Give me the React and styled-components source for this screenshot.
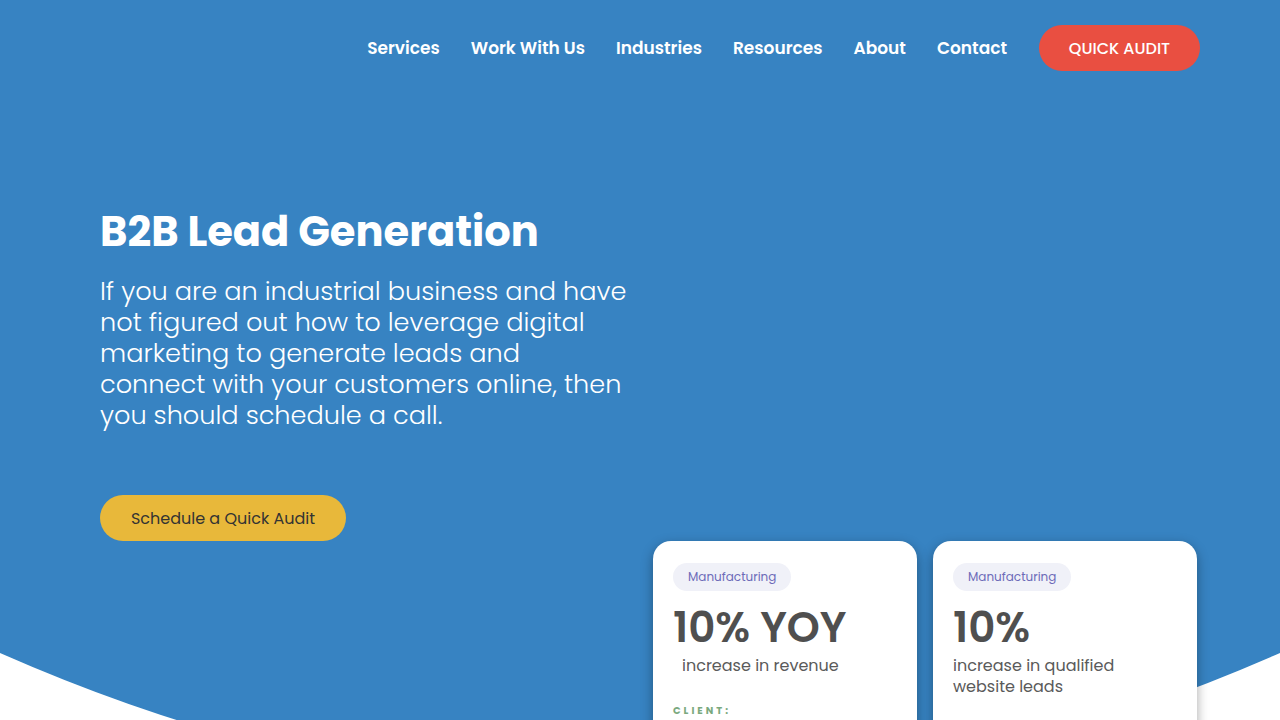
import React from "react";
import styled, { createGlobalStyle } from "styled-components";

const GlobalStyle = createGlobalStyle`
  html, body {
    margin: 0;
    padding: 0;
    background: #ffffff;
    font-family: "Poppins", "Open Sans", "Liberation Sans", sans-serif;
  }
  * { box-sizing: border-box; }
`;

// nav links
const links = ["Services", "Work With Us", "Industries", "Resources", "About", "Contact"];

// result cards
const results = [
  { tag: "Manufacturing", big: "10% YOY", text: "increase in revenue", indent: true },
  { tag: "Manufacturing", big: "10%", text: "increase in qualified website leads", indent: false },
];

const App = () => {
  return (
    <>
      <GlobalStyle />
      <Hero>
        <Curve viewBox="0 0 1280 147" preserveAspectRatio="none">
          <path d="M0 0 Q640 282 1280 0 L1280 147 L0 147 Z" fill="#ffffff" />
        </Curve>
        <Container>
          <Header>
            <Nav>
              {links.map((l) => (
                <NavLink key={l}>{l}</NavLink>
              ))}
            </Nav>
            <AuditButton>QUICK AUDIT</AuditButton>
          </Header>

          <Intro>
            <Title>B2B Lead Generation</Title>
            <Lead>
              If you are an industrial business and have<br />
              not figured out how to leverage digital<br />
              marketing to generate leads and<br />
              connect with your customers online, then<br />
              you should schedule a call.
            </Lead>
            <ScheduleButton>Schedule a Quick Audit</ScheduleButton>
          </Intro>

          <Cards>
            {results.map((r, i) => (
              <Card key={i}>
                <Tag>{r.tag}</Tag>
                <Big>{r.big}</Big>
                <Desc $indent={r.indent}>{r.text}</Desc>
                <Client>CLIENT:</Client>
              </Card>
            ))}
          </Cards>
        </Container>
      </Hero>
    </>
  );
};

const Hero = styled.section`
  position: relative;
  height: 800px;
  background: #3783c2;
`;

const Curve = styled.svg`
  position: absolute;
  left: 0;
  top: 653px;
  width: 100%;
  height: 147px;
  display: block;
`;

const Container = styled.div`
  position: relative;
  z-index: 1;
  padding: 0 80px 0 100px;
`;

const Header = styled.header`
  display: flex;
  justify-content: flex-end;
  align-items: center;
  padding-top: 25px;
  height: 71px;
`;

const Nav = styled.nav`
  display: flex;
  gap: 31px;
  margin-right: 32px;
`;

const NavLink = styled.a`
  color: #ffffff;
  font-size: 17px;
  font-weight: 600;
  cursor: pointer;
`;

const AuditButton = styled.button`
  width: 161px;
  height: 46px;
  border: none;
  border-radius: 23px;
  background: #e94f41;
  color: #ffffff;
  font-family: inherit;
  font-size: 16px;
  font-weight: 500;
`;

const Intro = styled.div`
  padding-top: 136px;
  height: 470px;
`;

const Title = styled.h1`
  margin: 0;
  color: #ffffff;
  font-size: 41.6px;
  font-weight: 700;
  line-height: 50px;
`;

const Lead = styled.p`
  margin: 19px 0 0;
  color: #ffffff;
  font-size: 25.6px;
  font-weight: 300;
  line-height: 31px;
`;

const ScheduleButton = styled.button`
  margin-top: 64px;
  width: 246px;
  height: 46px;
  border: none;
  border-radius: 23px;
  background: #e8b83a;
  color: #333333;
  font-family: inherit;
  font-size: 16px;
  font-weight: 400;
`;

const Cards = styled.div`
  display: flex;
  justify-content: flex-end;
  gap: 16px;
  margin-right: 3px;
`;

const Card = styled.div`
  width: 264px;
  height: 300px;
  padding: 22px 20px;
  background: #ffffff;
  border-radius: 18px;
  box-shadow: 0 4px 12px rgba(0, 0, 0, 0.35);
`;

const Tag = styled.span`
  display: inline-block;
  padding: 5px 15px;
  border-radius: 14px;
  background: #f0f1f8;
  color: #6d6bb8;
  font-size: 12px;
  line-height: 18px;
`;

const Big = styled.div`
  margin-top: 12px;
  color: #4f4f4f;
  font-size: 42px;
  font-weight: 600;
  line-height: 50px;
`;

const Desc = styled.div`
  margin-top: 2px;
  padding-left: ${(p) => (p.$indent ? "9px" : "0")};
  color: #5a5a5a;
  font-size: 16px;
  line-height: 21px;
  width: 180px;
`;

const Client = styled.div`
  margin-top: 27px;
  color: #7aa97e;
  font-size: 10px;
  font-weight: 700;
  letter-spacing: 3px;
`;

export default App;
